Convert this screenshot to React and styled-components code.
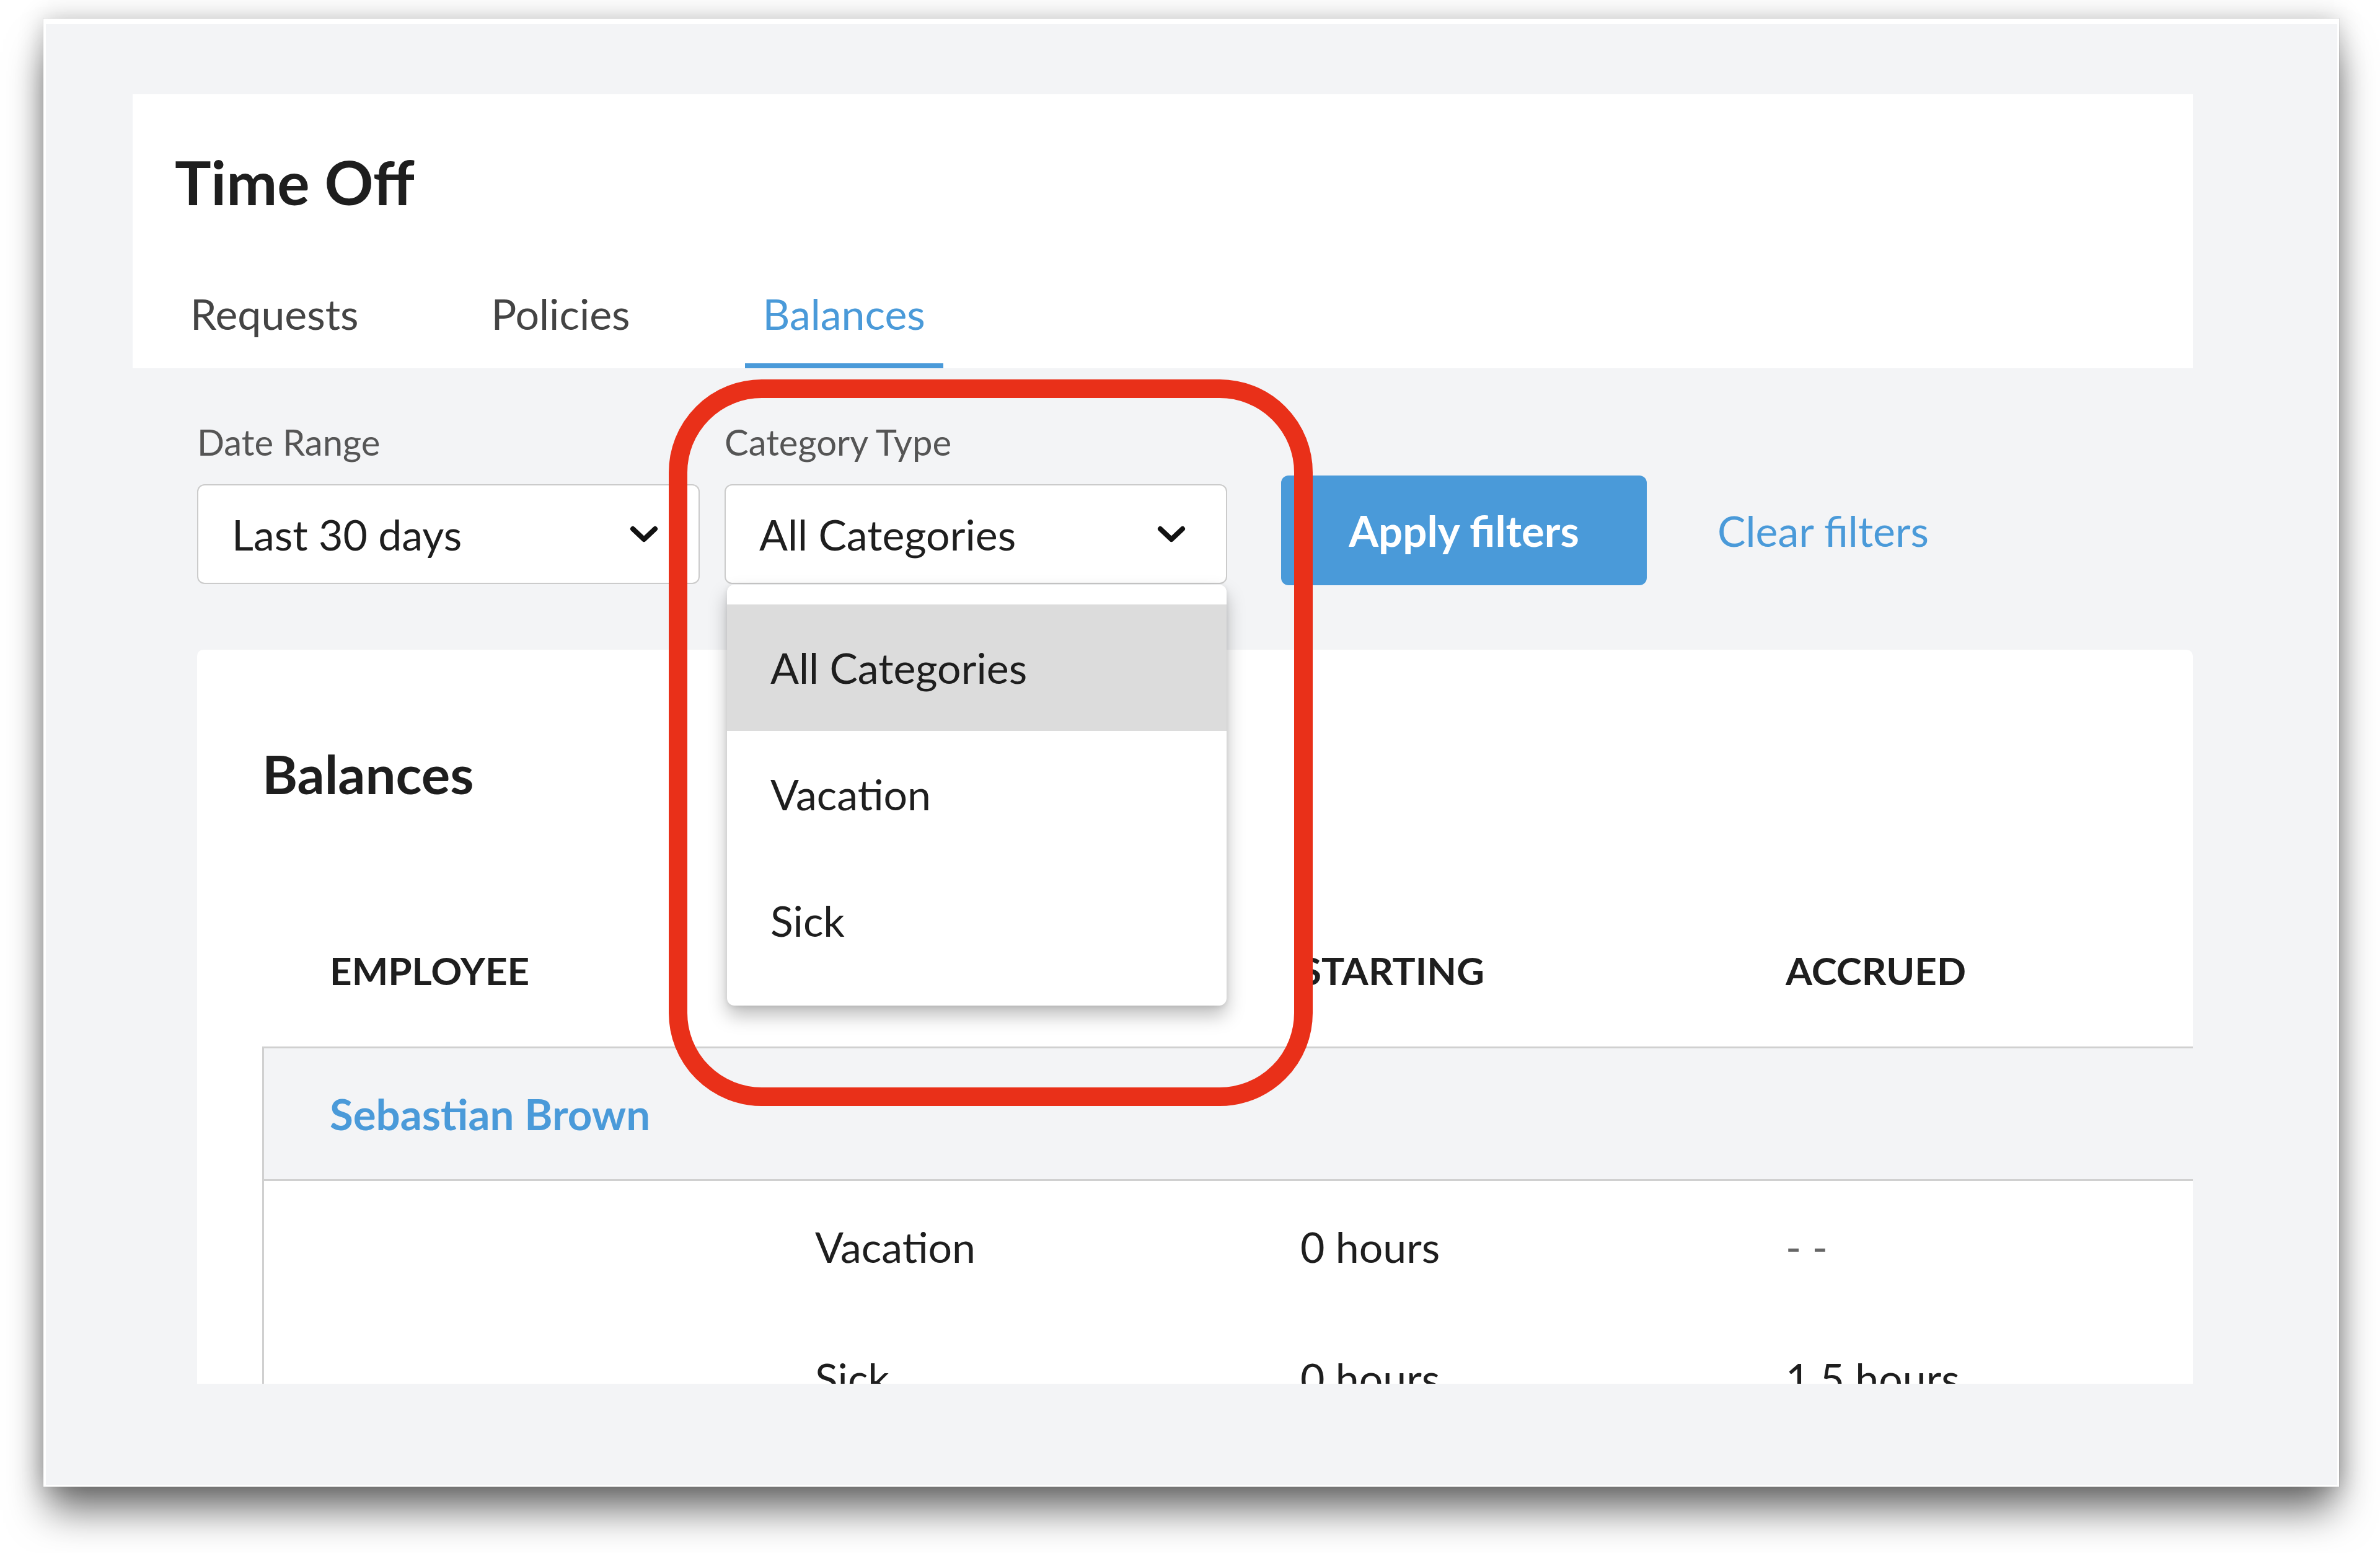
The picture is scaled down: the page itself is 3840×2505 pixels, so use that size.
import styled, { createGlobalStyle } from 'styled-components'

const GlobalStyle = createGlobalStyle`
  html, body {
    margin: 0;
    padding: 0;
    background: #ffffff;
  }
  body {
    font-family: Lato, "Noto Sans", "Liberation Sans", sans-serif;
    color: #1e1e1e;
  }
  * {
    box-sizing: border-box;
  }
`

const BLUE = '#4a9ad9'
const LINE = '#d0d0d0'

const Stage = styled.div`
  width: 3840px;
  height: 2505px;
  padding: 30px 0 0 70px;
  overflow: hidden;
`

const Window = styled.div`
  position: relative;
  width: 3704px;
  height: 2368px;
  background: #f3f4f6;
  border-style: solid;
  border-color: #ffffff;
  border-width: 9px 3px 3px 4px;
  box-shadow:
    0 0 0 1px rgba(0, 0, 0, 0.05),
    0 46px 60px -8px rgba(0, 0, 0, 0.55),
    0 0 38px rgba(0, 0, 0, 0.24);
`

const Page = styled.div`
  width: 3324px;
  margin-left: 140px;
  padding-top: 113px;
`

const HeaderCard = styled.header`
  background: #ffffff;
  padding: 92px 0 0 68px;
`

const Title = styled.h1`
  margin: 0;
  font-size: 98px;
  line-height: 1;
  font-weight: 700;
  color: #1e1e1e;
`

const Tabs = styled.nav`
  display: flex;
  gap: 156px;
  margin: 130px 0 0 -4px;
`

const Tab = styled.div`
  padding: 0 29px 46px;
  border-bottom: 8px solid ${({ active }) => (active ? BLUE : 'transparent')};
  font-size: 68px;
  line-height: 1;
  color: ${({ active }) => (active ? BLUE : '#444444')};
`

const Filters = styled.div`
  display: flex;
  align-items: flex-end;
  padding-left: 104px;
  margin-top: 90px;
`

const Field = styled.div`
  position: relative;
  display: flex;
  flex-direction: column;
  width: 811px;
  & + & {
    margin-left: 40px;
  }
`

const Label = styled.label`
  font-size: 58px;
  line-height: 1;
  color: #555555;
  margin-bottom: 39px;
`

const Select = styled.div`
  display: flex;
  align-items: center;
  justify-content: space-between;
  height: 161px;
  padding: 0 65px 0 54px;
  background: #ffffff;
  border: 2px solid #cbcbcb;
  border-radius: 12px;
  font-size: 68px;
  line-height: 1;
  color: #1e1e1e;
`

const Menu = styled.ul`
  position: absolute;
  z-index: 2;
  top: 100%;
  left: 4px;
  width: 806px;
  margin: 1px 0 0;
  padding: 32px 0 35px;
  list-style: none;
  background: #ffffff;
  border-radius: 12px;
  box-shadow:
    0 16px 30px rgba(0, 0, 0, 0.26),
    0 2px 8px rgba(0, 0, 0, 0.1);
`

const MenuItem = styled.li`
  display: flex;
  align-items: center;
  height: 204px;
  padding-left: 70px;
  font-size: 68px;
  line-height: 1;
  color: #1e1e1e;
  background: ${({ selected }) => (selected ? '#dcdcdc' : 'transparent')};
`

const ApplyButton = styled.button`
  width: 590px;
  height: 177px;
  margin: 0 0 -2px 87px;
  border: none;
  border-radius: 12px;
  background: ${BLUE};
  color: #ffffff;
  font-family: inherit;
  font-size: 69px;
  font-weight: 700;
  line-height: 1;
`

const ClearLink = styled.a`
  display: flex;
  align-items: center;
  height: 177px;
  margin: 0 0 -2px 114px;
  color: ${BLUE};
  font-size: 68px;
  line-height: 1;
`

const BalancesCard = styled.section`
  width: 3220px;
  height: 1184px;
  margin: 106px 0 0 104px;
  padding: 156px 0 0 105px;
  background: #ffffff;
  border-radius: 10px 10px 0 0;
  overflow: hidden;
`

const CardTitle = styled.h2`
  margin: 0;
  font-size: 87px;
  line-height: 1;
  font-weight: 700;
  color: #1e1e1e;
`

const HeadRow = styled.div`
  display: grid;
  grid-template-columns: repeat(4, 783px);
  padding: 243px 0 92px;
`

const HeadCell = styled.div`
  padding-left: 109px;
  font-size: 62px;
  line-height: 1;
  font-weight: 700;
  color: #1e1e1e;
  white-space: nowrap;
`

const TableBody = styled.div`
  border-left: 3px solid ${LINE};
  border-top: 3px solid ${LINE};
`

const GroupRow = styled.div`
  display: flex;
  align-items: center;
  height: 214px;
  padding-left: 106px;
  background: #f3f4f6;
  border-bottom: 3px solid ${LINE};
`

const EmployeeName = styled.a`
  font-size: 69px;
  line-height: 1;
  font-weight: 700;
  color: ${BLUE};
`

const DataRow = styled.div`
  display: grid;
  grid-template-columns: repeat(4, 783px);
  align-items: center;
  height: 212px;
  margin-left: -3px;
`

const Cell = styled.div`
  padding-left: 109px;
  font-size: 68px;
  line-height: 1;
  white-space: nowrap;
  color: ${({ muted }) => (muted ? '#666666' : '#1e1e1e')};
`

// red highlight ring drawn over the category filter
const Highlight = styled.div`
  position: absolute;
  z-index: 3;
  left: 1005px;
  top: 573px;
  width: 1039px;
  height: 1172px;
  border: 30px solid #e93019;
  border-radius: 150px;
  pointer-events: none;
`

const Chevron = () => (
  <svg width="46" height="28" viewBox="0 0 46 28" fill="none">
    <polyline
      points="5,5 23,22 41,5"
      stroke="#111111"
      strokeWidth="8"
      strokeLinecap="round"
      strokeLinejoin="round"
    />
  </svg>
)

const columns = ['EMPLOYEE', 'CATEGORY', 'STARTING', 'ACCRUED']

const rows = [
  { category: 'Vacation', starting: '0 hours', accrued: '- -' },
  { category: 'Sick', starting: '0 hours', accrued: '1.5 hours' },
]

export default function App() {
  return (
    <>
      <GlobalStyle />
      <Stage>
        <Window>
          <Page>
            <HeaderCard>
              <Title>Time Off</Title>
              <Tabs>
                <Tab>Requests</Tab>
                <Tab>Policies</Tab>
                <Tab active>Balances</Tab>
              </Tabs>
            </HeaderCard>

            <Filters>
              <Field>
                <Label>Date Range</Label>
                <Select>
                  <span>Last 30 days</span>
                  <Chevron />
                </Select>
              </Field>
              <Field>
                <Label>Category Type</Label>
                <Select>
                  <span>All Categories</span>
                  <Chevron />
                </Select>
                <Menu>
                  <MenuItem selected>All Categories</MenuItem>
                  <MenuItem>Vacation</MenuItem>
                  <MenuItem>Sick</MenuItem>
                </Menu>
              </Field>
              <ApplyButton>Apply filters</ApplyButton>
              <ClearLink>Clear filters</ClearLink>
            </Filters>

            <BalancesCard>
              <CardTitle>Balances</CardTitle>
              <HeadRow>
                {columns.map((c) => (
                  <HeadCell key={c}>{c}</HeadCell>
                ))}
              </HeadRow>
              <TableBody>
                <GroupRow>
                  <EmployeeName>Sebastian Brown</EmployeeName>
                </GroupRow>
                {rows.map((r) => (
                  <DataRow key={r.category}>
                    <Cell />
                    <Cell>{r.category}</Cell>
                    <Cell>{r.starting}</Cell>
                    <Cell muted={r.accrued === '- -'}>{r.accrued}</Cell>
                  </DataRow>
                ))}
              </TableBody>
            </BalancesCard>
          </Page>
          <Highlight />
        </Window>
      </Stage>
    </>
  )
}
